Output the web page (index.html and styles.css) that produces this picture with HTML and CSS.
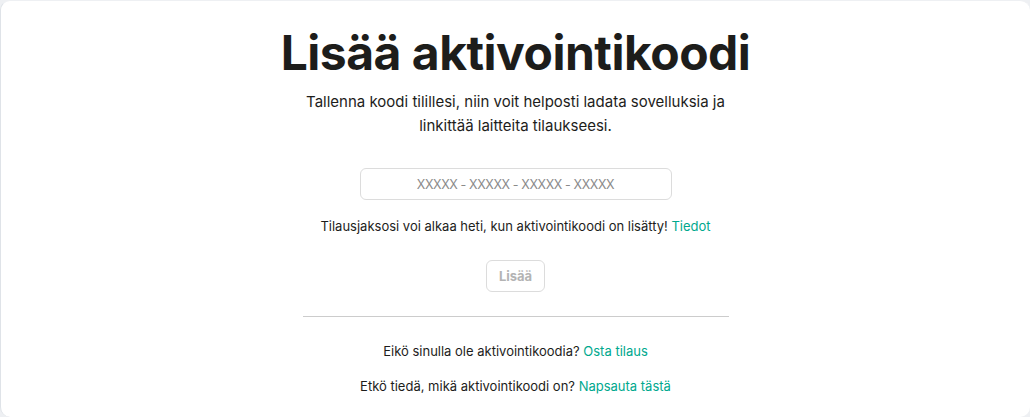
FILE: index.html
```html
<!DOCTYPE html>
<html lang="fi">
<head>
<meta charset="utf-8">
<title>Lisää aktivointikoodi</title>
<link rel="stylesheet" href="styles.css">
</head>
<body>
<main class="card">
  <section class="content">
    <h1 class="title">Lisää aktivointikoodi</h1>
    <p class="subtitle">Tallenna koodi tilillesi, niin voit helposti ladata sovelluksia ja linkittää laitteita tilaukseesi.</p>
    <input class="code-input" type="text" placeholder="XXXXX - XXXXX - XXXXX - XXXXX">
    <p class="note">Tilausjaksosi voi alkaa heti, kun aktivointikoodi on lisätty! <a class="link" href="#">Tiedot</a></p>
    <button class="add-btn" type="button" disabled>Lisää</button>
    <hr class="divider">
    <p class="help">Eikö sinulla ole aktivointikoodia? <a class="link" href="#">Osta tilaus</a></p>
    <p class="help">Etkö tiedä, mikä aktivointikoodi on? <a class="link" href="#">Napsauta tästä</a></p>
  </section>
</main>
</body>
</html>
```

FILE: styles.css
```css
* { box-sizing: border-box; }
html, body { margin: 0; height: 100%; }
body {
  background: #eef0f3;
  font-family: Inter, "Noto Sans", "Liberation Sans", sans-serif;
  color: #1d1d1b;
}
.card {
  height: 417px;
  background: #fff;
  border-radius: 10px;
  border-left: 1px solid #dfe3e8;
  border-top: 1px solid #eef0f3;
  display: flex;
  justify-content: center;
}
.content {
  display: flex;
  flex-direction: column;
  align-items: center;
  width: 426px;
  padding-top: 24px;
}
.title {
  margin: 0;
  font-size: 48px;
  line-height: 56px;
  font-weight: 700;
  letter-spacing: -0.5px;
  white-space: nowrap;
}
.subtitle {
  margin: 9px 0 0;
  font-size: 15px;
  line-height: 24px;
  text-align: center;
  width: 440px;
  font-weight: 400;
}
.code-input {
  margin-top: 30px;
  width: 312px;
  height: 32px;
  border: 1px solid #dcdcdc;
  border-radius: 6px;
  text-align: center;
  font-family: inherit;
  font-size: 12.5px;
  letter-spacing: -0.4px;
  color: #1d1d1b;
  outline: none;
}
.code-input::placeholder { color: #8a8a8a; }
.note {
  margin: 16px 0 0;
  font-size: 13px;
  line-height: 20px;
  white-space: nowrap;
}
.link { color: #00a88e; text-decoration: none; }
.add-btn {
  margin-top: 24px;
  width: 59px;
  height: 32px;
  background: #fff;
  border: 1px solid #dcdcdc;
  border-radius: 6px;
  color: #b3b3b3;
  font-family: inherit;
  font-size: 13px;
  font-weight: 700;
  padding: 0;
}
.divider {
  margin: 24px 0 0;
  width: 426px;
  border: 0;
  border-top: 1px solid #cccccc;
}
.help {
  margin: 24px 0 0;
  font-size: 13px;
  line-height: 20px;
  letter-spacing: 0;
  white-space: nowrap;
}
.help + .help { margin-top: 15px; }
```
